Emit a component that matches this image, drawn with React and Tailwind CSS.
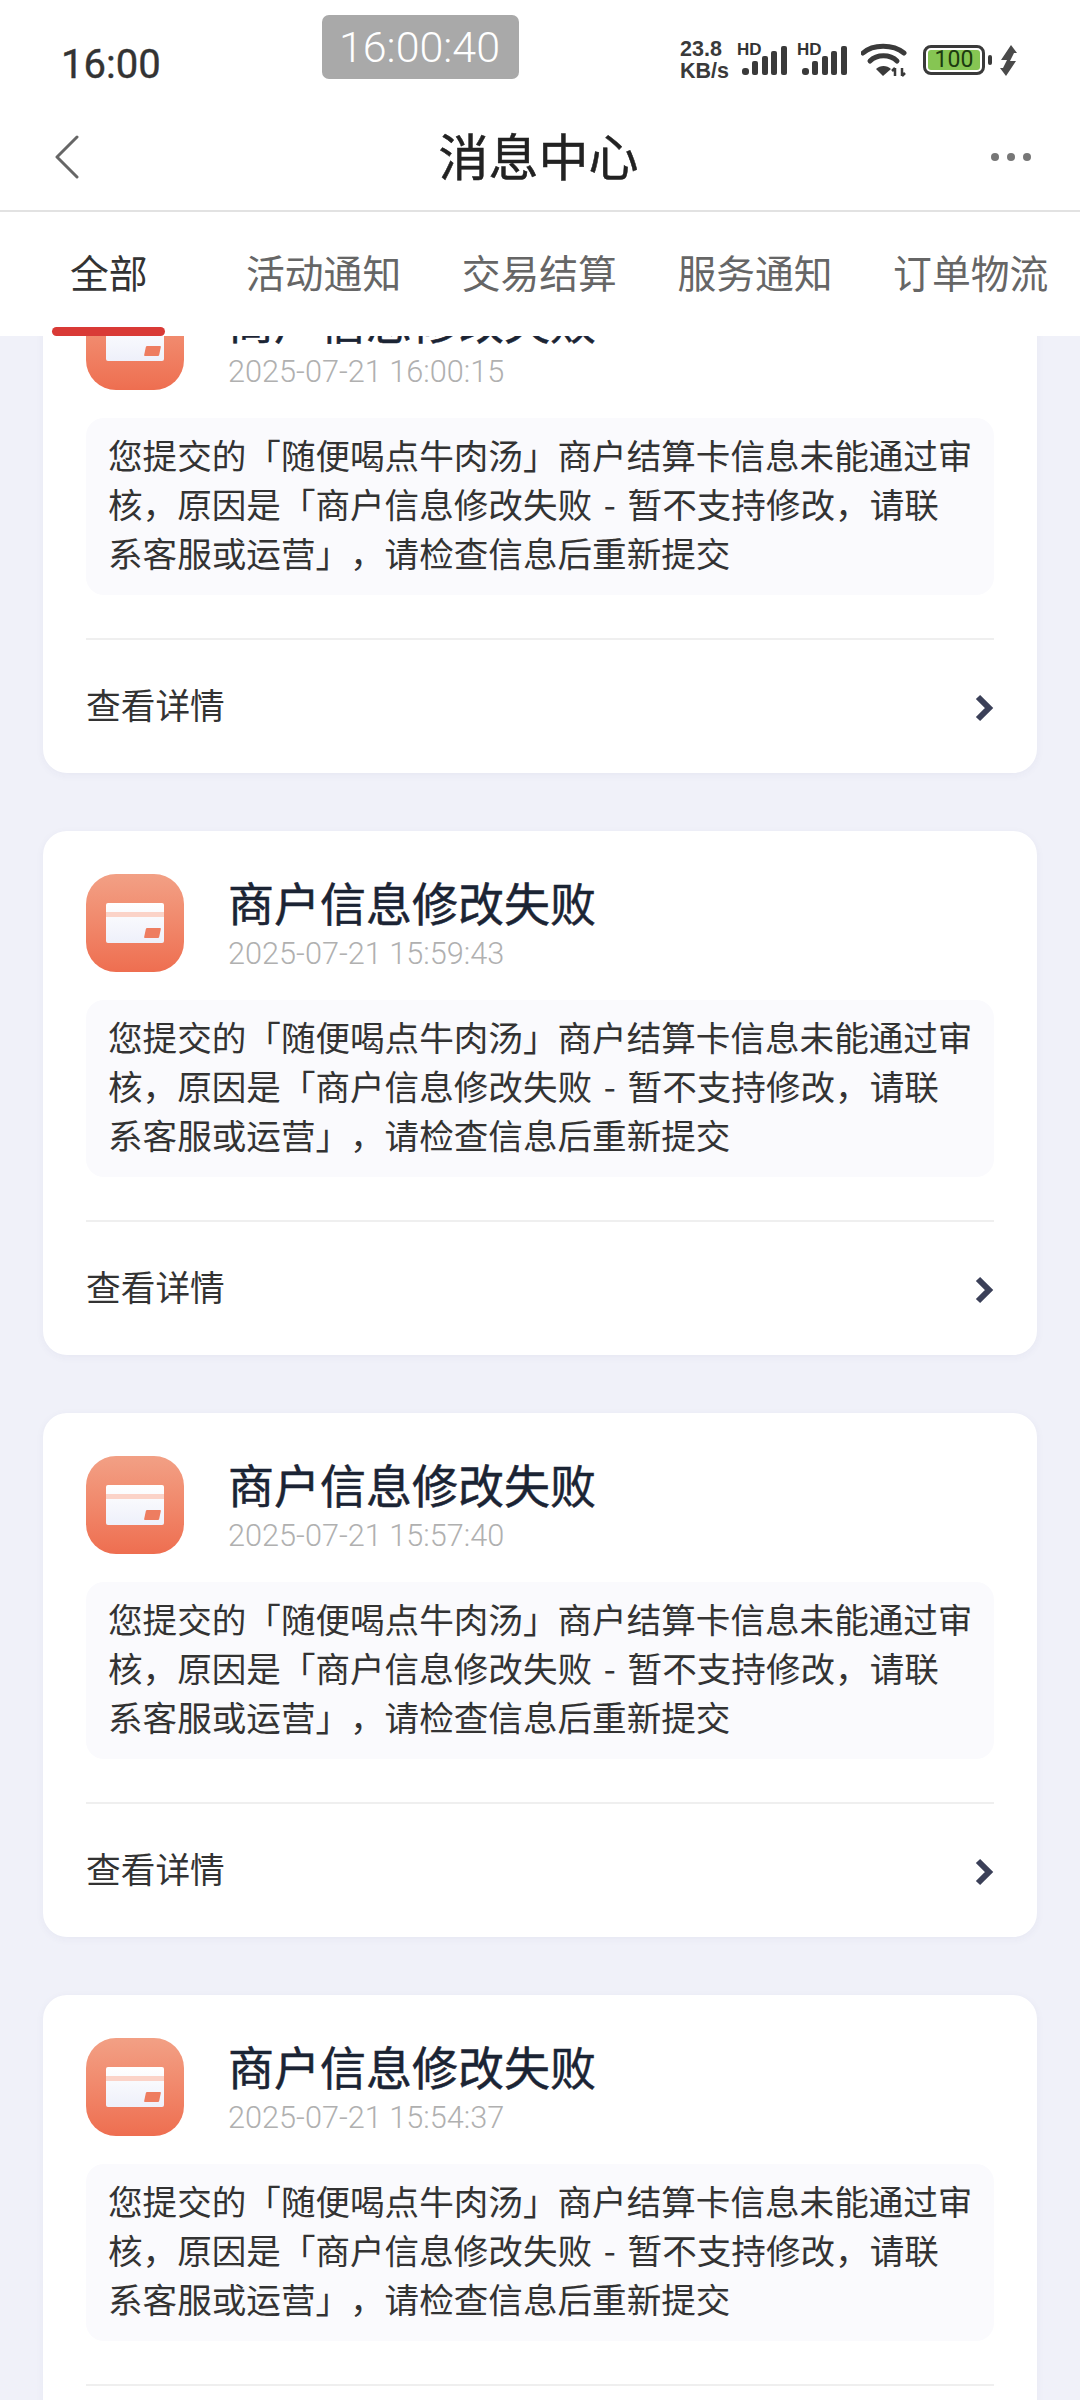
const CJK = "font-['Noto_Sans_CJK_SC',sans-serif]";

const messages = [
  "2025-07-21 16:00:15",
  "2025-07-21 15:59:43",
  "2025-07-21 15:57:40",
  "2025-07-21 15:54:37",
];

const tabs = ["活动通知", "交易结算", "服务通知", "订单物流"];

function Signal({ label }) {
  return (
    <div className="relative w-[45px] h-[34px]">
      <span className="absolute left-[-5px] top-[0px] text-[17px] leading-[13px] font-bold text-[#333] font-['Liberation_Sans',sans-serif]">
        {label}
      </span>
      <svg width="45" height="34" viewBox="0 0 45 34" className="absolute left-0 top-0">
        <g fill="#3a3a3a">
          <rect x="0" y="25" width="7" height="7" rx="3" />
          <rect x="10" y="18" width="6" height="14" rx="2" />
          <rect x="20" y="13" width="6" height="19" rx="2" />
          <rect x="29" y="8" width="6" height="24" rx="2" />
          <rect x="39" y="3" width="6" height="29" rx="2" />
        </g>
      </svg>
    </div>
  );
}

function StatusBar() {
  return (
    <div className="relative h-[90px] flex items-end justify-between pl-[61px] pr-[63px] pb-[1px]">
      <span className="text-[40px] leading-[48px] font-normal text-[#333] [-webkit-text-stroke:0.4px_#333] font-['Roboto',sans-serif]">16:00</span>
      {/* screen recorder chip */}
      <div className="absolute left-[322px] top-[15px] w-[197px] h-[64px] pt-[1px] pr-[2px] rounded-[7px] bg-[#a9a9a9] flex items-center justify-center text-[43px] font-light text-white font-['Roboto',sans-serif]">
        16:00:40
      </div>
      <div className="flex items-center mb-[7px]">
        <div className="text-[21.5px] leading-[22px] font-bold text-[#3a3a3a] font-['Liberation_Sans',sans-serif] w-[54px] mr-[8px]">
          23.8
          <br />
          KB/s
        </div>
        <Signal label="HD" />
        <div className="w-[15px]" />
        <Signal label="HD" />
        <svg width="46" height="34" viewBox="0 0 46 34" className="ml-[14px]">
          <g fill="none" stroke="#3a3a3a" strokeLinecap="round">
            <path d="M2 10 C12 1 32 1 43 10" strokeWidth="5" />
            <path d="M9 18 C16 11 29 11 36 18" strokeWidth="5" />
          </g>
          <path d="M15 26 C19 22 26 22 30 26 L22 33 Z" fill="#3a3a3a" />
          <path d="M34 33 V25 M31 28 L34 25 M41 25 V33 M41 33 L44 30" stroke="#3a3a3a" strokeWidth="2.5" fill="none" />
        </svg>
        <div className="ml-[16px] w-[62px] h-[30px] rounded-[8px] border-[3px] border-[#3a3a3a] p-[2px]">
          <div className="h-full rounded-[3px] bg-[#86c553] flex items-center justify-center text-[23px] text-[#1c3a10] font-['Roboto',sans-serif]">
            100
          </div>
        </div>
        <div className="ml-[3px] w-[4px] h-[10px] rounded-full bg-[#3a3a3a]" />
        <svg width="17" height="31" viewBox="0 0 17 31" className="ml-[8px]">
          <path d="M11 0 L1 15 L7 15 L3 23 L0 23 L6 31 L16 16 L10 16 L14 8 L17 8 Z" fill="#4a4a4a" />
        </svg>
      </div>
    </div>
  );
}

function Header() {
  return (
    <div className="relative z-10 bg-white">
      <StatusBar />
      <div className="h-[122px] pt-[8px] border-b-2 border-[#e2e2e2] grid grid-cols-[1fr_auto_1fr] items-center pl-[54px] pr-[49px]">
        <svg width="26" height="44" viewBox="0 0 26 44" className="mt-[6px]">
          <path d="M23 2 L3 22 L23 42" fill="none" stroke="#666" strokeWidth="3" strokeLinecap="round" strokeLinejoin="round" />
        </svg>
        <span className={`mr-[8px] text-[50px] leading-[60px] font-normal text-[#222] [-webkit-text-stroke:0.5px_#222] ${CJK}`}>消息中心</span>
        <div className="flex gap-[8px] justify-end mt-[6px]">
          <span className="w-[8px] h-[8px] rounded-full bg-[#777]" />
          <span className="w-[8px] h-[8px] rounded-full bg-[#777]" />
          <span className="w-[8px] h-[8px] rounded-full bg-[#777]" />
        </div>
      </div>
      <div className={`relative h-[124px] flex items-center pl-[70px] pb-[6px] text-[38.8px] leading-[46px] ${CJK}`}>
        <span className="w-[176px] text-[#333]">全部</span>
        <div className="flex gap-[60.5px] text-[#666] whitespace-nowrap">
          {tabs.map((t) => (
            <span key={t}>{t}</span>
          ))}
        </div>
        <div className="absolute left-[52px] bottom-0 w-[113px] h-[9px] rounded-full bg-[#d93a36]" />
      </div>
    </div>
  );
}

function CardIcon() {
  return (
    <div className="w-[98px] h-[98px] rounded-[30px] bg-gradient-to-b from-[#f2a085] to-[#ee6e50] flex items-center justify-center shrink-0">
      <div className="relative w-[58px] h-[40px] bg-gradient-to-b from-white to-[#eef0fa] rounded-[2px]">
        <div className="h-[5px] mt-[9px] bg-[#fbd3c8]" />
        <div className="absolute right-[4px] bottom-[5px] w-[15px] h-[10px] bg-[#ee7d60] rounded-[1px] skew-x-[-12deg]" />
      </div>
    </div>
  );
}

function MessageCard({ time }) {
  return (
    <div className="bg-white rounded-[24px] shadow-[0_2px_8px_rgba(60,60,110,0.05)] pt-[43px] px-[43px] h-[524px]">
      <div className="flex items-start">
        <CardIcon />
        <div className="ml-[44px]">
          <div className={`text-[46px] leading-[55px] font-normal text-[#1b2434] [-webkit-text-stroke:0.5px_#1b2434] ${CJK}`}>商户信息修改失败</div>
          <div className="mt-[7px] text-[30.7px] leading-[36px] font-light text-[#b0b0b0] font-['Roboto',sans-serif]">{time}</div>
        </div>
      </div>
      <div className={`mt-[28px] h-[177px] rounded-[18px] bg-[#fafafd] pl-[22px] pt-[12px] text-[34.6px] leading-[49px] text-[#333] whitespace-nowrap [text-spacing-trim:space-all] ${CJK}`}>
        您提交的「随便喝点牛肉汤」商户结算卡信息未能通过审
        <br />
        核，原因是「商户信息修改失败<span className="px-[4px]"> - </span>暂不支持修改，请联
        <br />
        系客服或运营」，请检查信息后重新提交
      </div>
      <div className="mt-[43px] border-t-2 border-[#efefef] h-[134px] flex items-center justify-between pb-[4px]">
        <span className={`text-[34.7px] leading-[50px] text-[#333] ${CJK}`}>查看详情</span>
        <svg width="20" height="28" viewBox="0 0 20 28" className="mt-[7px]">
          <path d="M4 3 L15 14 L4 25" fill="none" stroke="#3b4058" strokeWidth="6" />
        </svg>
      </div>
    </div>
  );
}

export default function App() {
  return (
    <div className="w-[1080px] h-[2400px] overflow-hidden bg-[#f0f1f9]">
      <Header />
      <div className="mt-[-87px] px-[43px] flex flex-col gap-[58px]">
        {messages.map((time) => (
          <MessageCard key={time} time={time} />
        ))}
      </div>
    </div>
  );
}
